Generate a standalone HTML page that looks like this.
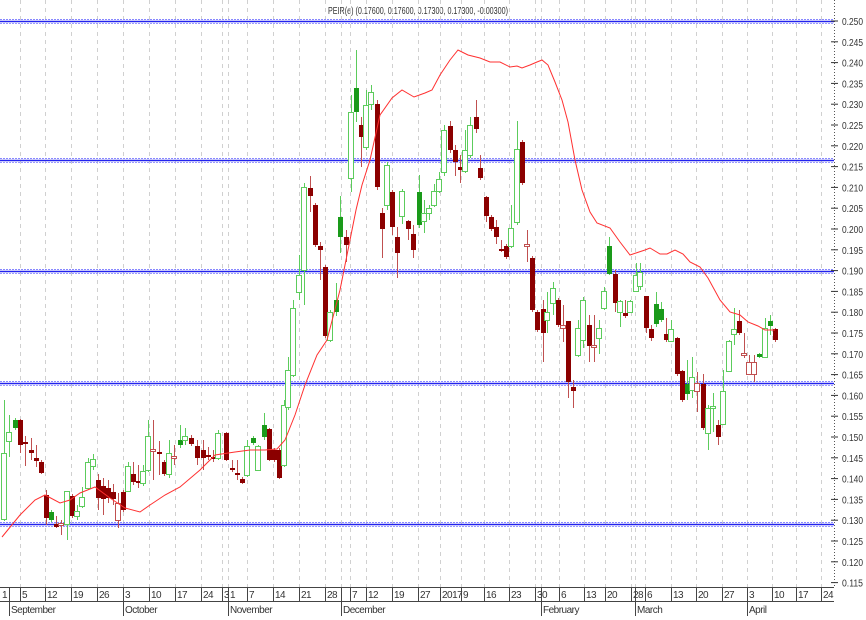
<!DOCTYPE html>
<html><head><meta charset="utf-8"><style>
html,body{margin:0;padding:0;background:#fff;width:866px;height:620px;overflow:hidden}
svg{display:block;font-family:"Liberation Sans",sans-serif}
</style></head><body>
<svg id="c" width="866" height="620" xmlns="http://www.w3.org/2000/svg">
<rect width="866" height="620" fill="#fff"/>
<text x="328" y="14" font-size="10" fill="#333" textLength="180" lengthAdjust="spacingAndGlyphs">PEIR(e) (0.17600, 0.17600, 0.17300, 0.17300, -0.00300)</text>
</svg>
<script>
var s=document.getElementById('c'),h='';
var seps=[20,45,71,97,123,149,175,201,222,228,247,273,299,325,341,350,366,392,418,440,461,484,509,535,541,559,584,605,631,635,645,671,696,722,747,772,796,821];
seps.forEach(function(x){h+='<line x1="'+x+'.5" y1="0" x2="'+x+'.5" y2="587" stroke="#d0d0d0" stroke-dasharray="4,4"/>';});
[21,160,271,383,524].forEach(function(y){
h+='<line x1="0" y1="'+(y-1.5)+'" x2="834" y2="'+(y-1.5)+'" stroke="#8888ff" stroke-dasharray="2,1"/>';
h+='<line x1="0" y1="'+(y+0.5)+'" x2="834" y2="'+(y+0.5)+'" stroke="#2222ee" stroke-width="1.6"/>';
h+='<line x1="0" y1="'+(y+2.5)+'" x2="834" y2="'+(y+2.5)+'" stroke="#9999ff" stroke-dasharray="2,1"/>';
});
h+='<line x1="834.5" y1="0" x2="834.5" y2="587" stroke="#555" stroke-dasharray="1,2"/>';
for(var i=0;i<=27;i++){var y=21+i*20.8;var v=(0.250-i*0.005).toFixed(3);
h+='<line x1="831" y1="'+y+'" x2="838" y2="'+y+'" stroke="#333"/>';
h+='<text x="842" y="'+(y+4)+'" font-size="10" fill="#333" textLength="21" lengthAdjust="spacingAndGlyphs">'+v+'</text>';}
var C=[
[4,453,519,400,521,'g'],[9,432,441,415,457,'g'],[15,420,428,418,430,'G'],[20,420,445,419,453,'r'],[25,442,444,436,466,'r'],[31,450,453,438,460,'r'],[36,458,461,445,467,'r'],[41,462,473,460,474,'r'],[46,495,518,490,525,'r'],[51,512,520,510,522,'G'],[56,524,527,516,528,'r'],[61,523,525,520,535,'R'],[67,491,524,491,540,'g'],[72,496,516,494,518,'r'],[77,511,516,505,520,'g'],[82,497,506,487,508,'g'],[88,462,488,458,490,'g'],[93,459,466,454,470,'g'],[98,480,498,474,510,'r'],[103,486,499,478,515,'r'],[108,488,498,480,503,'r'],[113,492,499,484,505,'r'],[118,503,520,493,528,'R'],[123,492,510,490,512,'r'],[128,466,491,462,492,'g'],[133,474,482,462,485,'r'],[138,481,483,465,488,'r'],[143,471,483,465,486,'g'],[148,436,470,420,472,'g'],[153,449,451,420,480,'R'],[159,452,454,441,475,'r'],[164,462,474,460,476,'r'],[169,453,474,440,478,'g'],[174,456,458,445,465,'R'],[180,440,445,425,448,'G'],[185,436,440,428,445,'g'],[191,438,444,435,446,'r'],[197,446,458,440,465,'r'],[203,450,458,440,470,'r'],[208,455,457,447,460,'r'],[213,457,458,450,462,'r'],[218,433,458,430,460,'g'],[226,433,460,432,461,'r'],[232,468,470,460,472,'r'],[237,473,475,460,480,'r'],[242,479,483,477,484,'r'],[247,446,475,440,477,'g'],[253,438,443,436,445,'G'],[258,446,470,445,471,'g'],[264,425,437,413,440,'G'],[269,429,460,428,461,'r'],[274,450,460,448,462,'r'],[279,450,478,448,479,'r'],[284,405,465,400,467,'g'],[288,370,407,357,410,'g'],[293,308,375,300,377,'g'],
[299,275,292,255,300,'g'],[304,187,270,183,305,'g'],[310,188,196,176,212,'r'],[315,205,245,203,247,'r'],[320,246,250,242,280,'r'],[325,267,336,265,338,'r'],[330,312,340,310,342,'g'],[336,300,312,283,316,'G'],[340,217,237,196,253,'G'],[346,237,245,230,262,'r'],[351,112,178,95,192,'g'],[356,88,112,50,122,'G'],[361,125,137,117,167,'r'],[366,105,147,90,150,'g'],[371,92,104,85,110,'g'],[377,104,187,100,190,'r'],[382,213,229,208,258,'r'],[387,165,205,162,210,'g'],[392,192,227,190,235,'r'],[397,237,253,227,278,'r'],[402,191,216,189,224,'g'],[408,221,229,220,240,'r'],[413,234,250,225,258,'r'],[419,192,225,175,228,'G'],[424,213,221,200,233,'g'],[429,208,213,205,220,'g'],[434,191,205,184,207,'g'],[439,179,191,172,193,'g'],[444,130,172,125,176,'g'],[450,126,150,121,153,'r'],[455,150,162,145,176,'r'],[460,167,170,155,183,'r'],[465,150,171,130,173,'g'],[470,125,155,117,158,'g'],[476,117,129,100,133,'r'],[480,168,178,155,180,'r'],[486,197,216,196,222,'r'],[491,217,229,215,231,'r'],[496,227,237,220,244,'r'],[501,249,251,240,252,'r'],[506,246,257,244,259,'r'],[511,228,246,205,248,'g'],[517,149,222,121,225,'g'],[522,142,183,140,185,'r'],[527,244,246,230,262,'R'],[532,258,310,256,312,'r'],[537,312,330,310,332,'r'],
[543,309,333,300,362,'r'],[547,312,320,292,333,'g'],[553,288,303,282,315,'g'],[558,300,325,298,327,'r'],[563,325,328,305,342,'R'],[568,321,382,321,398,'r'],[573,387,391,380,408,'r'],[578,328,355,320,357,'g'],[583,300,340,297,348,'g'],[589,325,346,315,362,'r'],[594,345,346,315,362,'R'],[599,328,338,320,354,'g'],[604,291,308,287,310,'g'],[609,246,274,237,275,'G'],[615,274,303,270,312,'r'],[620,301,312,300,327,'g'],[625,313,316,300,318,'r'],[630,301,312,300,313,'g'],[636,275,291,263,292,'g'],[640,272,286,263,290,'g'],[646,296,328,296,333,'r'],[651,329,338,325,341,'r'],[656,304,324,292,327,'G'],[661,309,320,302,322,'G'],[666,334,340,318,342,'r'],[671,329,341,320,342,'g'],[677,338,374,337,376,'r'],[682,371,400,370,402,'r'],[687,384,394,360,400,'G'],[692,377,390,357,398,'g'],[697,383,391,372,412,'R'],[703,384,428,374,430,'r'],[708,408,433,405,450,'g'],[713,406,408,393,432,'g'],[718,425,437,420,445,'r'],[723,391,424,370,425,'g'],[729,341,371,340,372,'g'],[734,329,334,308,345,'g'],[739,321,333,310,335,'r'],[744,353,355,333,358,'R'],[749,362,374,355,375,'R'],[754,362,374,355,382,'R'],[759,354,357,353,358,'G'],[765,328,357,318,358,'g'],[770,321,326,315,335,'G'],[775,329,340,328,342,'r']];
C.forEach(function(c){var x=c[0],t=c[5];
var wc=(t=='g'||t=='G')?'#5ccc5c':'#c05050';
h+='<line x1="'+(x+0.5)+'" y1="'+c[3]+'" x2="'+(x+0.5)+'" y2="'+c[4]+'" stroke="'+wc+'"/>';
var hh=Math.max(c[2]-c[1],2);
if(t=='g'||t=='R')h+='<rect x="'+(x-2.5)+'" y="'+(c[1]+0.5)+'" width="5" height="'+hh+'" fill="#fff" stroke="'+(t=='g'?'#5ccc5c':'#c05050')+'"/>';
else h+='<rect x="'+(x-2)+'" y="'+c[1]+'" width="5" height="'+hh+'" fill="'+(t=='G'?'#1a9a1a':'#8b0000')+'"/>';
});
var M=[[2,537],[20,515],[35,500],[45,495],[60,503],[70,500],[80,493],[95,487],[110,498],[125,508],[140,512],[150,505],[165,495],[180,487],[200,470],[215,455],[235,452],[250,450],[265,450],[277,449],[285,440],[295,415],[305,385],[317,355],[327,340],[340,290],[350,240],[356,210],[362,185],[370,160],[380,115],[392,98],[402,90],[414,97],[425,93],[432,90],[440,75],[450,60],[458,50],[468,55],[480,58],[490,62],[500,62],[510,67],[517,66],[522,68],[530,65],[537,62],[542,60],[548,65],[555,82],[562,100],[568,122],[575,160],[582,190],[590,212],[597,223],[610,228],[620,242],[630,255],[636,253],[645,250],[650,248],[660,254],[667,254],[675,250],[683,254],[690,262],[700,267],[708,278],[720,300],[730,312],[740,315],[748,322],[758,326],[765,330],[775,330]];
h+='<polyline fill="none" stroke="#ff3030" stroke-width="1" points="'+M.map(function(p){return p.join(',')}).join(' ')+'"/>';
h+='<rect x="0" y="587" width="834" height="14" fill="#fff"/>';
h+='<line x1="0" y1="587.5" x2="834" y2="587.5" stroke="#444"/><line x1="0" y1="601.5" x2="834" y2="601.5" stroke="#444"/>';
var L=[[9,''],[20,'5'],[45,'12'],[71,'19'],[97,'26'],[123,'3'],[149,'10'],[175,'17'],[201,'24'],[222,'3'],[228,'1'],[247,'7'],[273,'14'],[299,'21'],[325,'28'],[341,''],[350,'7'],[366,'12'],[392,'19'],[418,'27'],[440,'2017'],[461,'9'],[484,'16'],[509,'23'],[535,'30'],[541,''],[559,'6'],[584,'13'],[605,'20'],[631,'28'],[635,''],[645,'6'],[671,'13'],[696,'20'],[722,'27'],[747,'3'],[772,'10'],[796,'17'],[821,'24']];
h+='<text x="2" y="598" font-size="10" fill="#333">1</text>';
L.forEach(function(l){h+='<line x1="'+(l[0]+0.5)+'" y1="587" x2="'+(l[0]+0.5)+'" y2="601" stroke="#444"/>';
if(l[1])h+='<text x="'+(l[0]+2)+'" y="598" font-size="10" fill="#333" style="letter-spacing:-0.5px">'+l[1]+'</text>';});
[[9,'September'],[123,'October'],[228,'November'],[341,'December'],[541,'February'],[635,'March'],[747,'April']].forEach(function(m){
h+='<line x1="'+(m[0]+0.5)+'" y1="601" x2="'+(m[0]+0.5)+'" y2="616" stroke="#444"/>';
h+='<text x="'+(m[0]+2)+'" y="613" font-size="10" fill="#333" style="letter-spacing:-0.5px">'+m[1]+'</text>';});
s.insertAdjacentHTML('beforeend',h);
</script>
</body></html>
